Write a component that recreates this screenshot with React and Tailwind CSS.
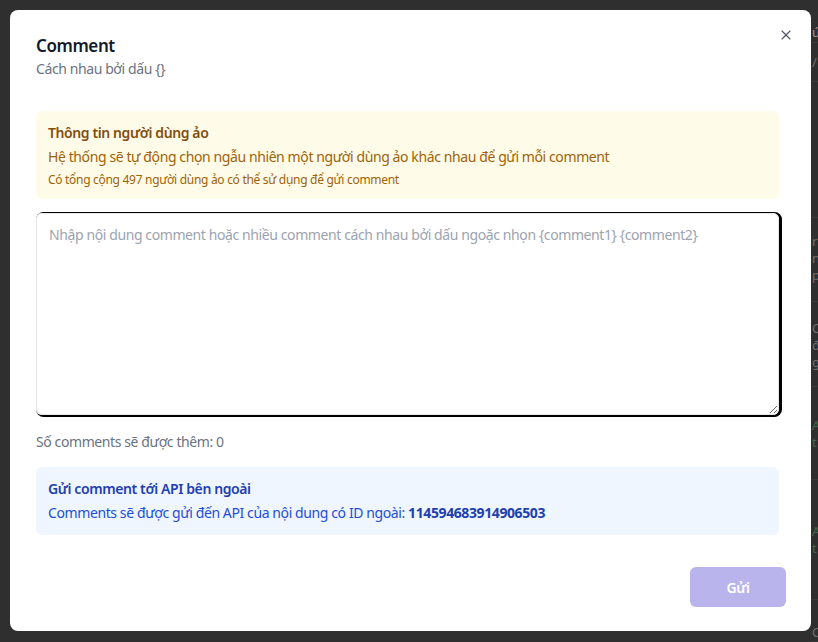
import { X } from 'lucide-react'

const BG_ROWS = [
  { h: 43, lines: [{ t: 'ú', c: 'text-[#9a9a9a]', top: 'pt-[24px]' }] },
  { h: 39, lines: [{ t: '/', c: 'text-[#6f6f6f]', top: 'pt-[11px]' }] },
  { h: 136, lines: [] },
  { h: 84, lines: [{ t: 'r', c: 'text-[#6f6f6f]', top: 'pt-[15px]' }, { t: 'n', c: 'text-[#6f6f6f]' }, { t: 'p', c: 'text-[#6f6f6f]' }] },
  { h: 85, lines: [{ t: 'C', c: 'text-[#6f6f6f]', top: 'pt-[18px]' }, { t: 'đ', c: 'text-[#6f6f6f]' }, { t: 'g', c: 'text-[#6f6f6f]' }] },
  { h: 93, lines: [{ t: 'A', c: 'text-[#3f6a4a]', top: 'pt-[30px]' }, { t: 't', c: 'text-[#3f6a4a]' }] },
  { h: 120, lines: [{ t: 'A', c: 'text-[#3f6a4a]', top: 'pt-[43px]' }, { t: 't', c: 'text-[#3f6a4a]' }] },
  { h: 42, lines: [{ t: 'C', c: 'text-[#6f6f6f]', top: 'pt-[24px]' }] },
]

function Backdrop() {
  return (
    <div className="flex h-full w-full bg-[#2f2f2f]">
      <div className="w-[811px] shrink-0" />
      <div className="flex flex-col flex-1 overflow-hidden">
        {BG_ROWS.map((r, i) => (
          <div key={i} style={{ height: r.h }} className="border-b border-[#3a3a3a] flex flex-col">
            {r.lines.map((l, j) => (
              <div key={j} className={`text-[13px] leading-[17px] pl-[1px] ${l.c} ${l.top || ''}`}>{l.t}</div>
            ))}
          </div>
        ))}
      </div>
    </div>
  )
}

export default function App() {
  return (
    <div className="relative w-[818px] h-[642px] overflow-hidden" style={{ fontFamily: '"Noto Sans", "Open Sans", sans-serif' }}>
      <Backdrop />
      <div className="absolute inset-0 pt-[10px] pl-[10px]">
        <div className="relative w-[801px] h-[621px] bg-white rounded-[8px] flex flex-col pl-[26px] pr-[32px] pt-[24px] tracking-[-0.4px]">
          <button className="absolute right-[17px] top-[17px] text-[#4b5563]">
            <X className="w-[16px] h-[16px]" strokeWidth={1.6} />
          </button>
          <h2 className="text-[17px] leading-[24px] font-semibold text-[#111827]">Comment</h2>
          <p className="text-[14px] leading-[20px] text-[#6b7280] mt-[1px]">Cách nhau bởi dấu {'{}'}</p>

          <div className="mt-[32px] bg-[#fefce8] rounded-[6px] px-[12px] pt-[12px] pb-[11px] flex flex-col">
            <div className="text-[14px] leading-[20px] font-semibold text-[#854d0e]">Thông tin người dùng ảo</div>
            <div className="text-[14px] leading-[20px] text-[#a16207] mt-[4px]">Hệ thống sẽ tự động chọn ngẫu nhiên một người dùng ảo khác nhau để gửi mỗi comment</div>
            <div className="text-[12px] leading-[16px] text-[#a16207] mt-[5px] tracking-[-0.3px]">Có tổng cộng 497 người dùng ảo có thể sử dụng để gửi comment</div>
          </div>

          <textarea
            className="mt-[14px] h-[202px] w-full border border-[#e5e7eb] rounded-[6px] px-[12px] py-[11px] text-[14px] leading-[20px] tracking-[-0.4px] text-[#111827] placeholder:text-[#9ca3af] outline-none shadow-[1.5px_0.5px_0_1.5px_#000]"
            placeholder="Nhập nội dung comment hoặc nhiều comment cách nhau bởi dấu ngoặc nhọn {comment1} {comment2}"
          />

          <div className="mt-[17px] text-[14px] leading-[20px] text-[#6b7280]">Số comments sẽ được thêm: 0</div>

          <div className="mt-[15px] bg-[#eff6ff] rounded-[6px] px-[12px] pt-[12px] pb-[12px] flex flex-col">
            <div className="text-[14px] leading-[20px] font-semibold text-[#1e40af]">Gửi comment tới API bên ngoài</div>
            <div className="text-[14px] leading-[20px] text-[#1d4ed8] mt-[4px]">
              Comments sẽ được gửi đến API của nội dung có ID ngoài: <span className="font-bold text-[#1e40af]">114594683914906503</span>
            </div>
          </div>

          <div className="flex justify-end mt-[32px] -mr-[7px]">
            <button className="w-[96px] h-[40px] rounded-[6px] bg-[#b9b5ec] text-white text-[14px] font-semibold">Gửi</button>
          </div>
        </div>
      </div>
    </div>
  )
}
